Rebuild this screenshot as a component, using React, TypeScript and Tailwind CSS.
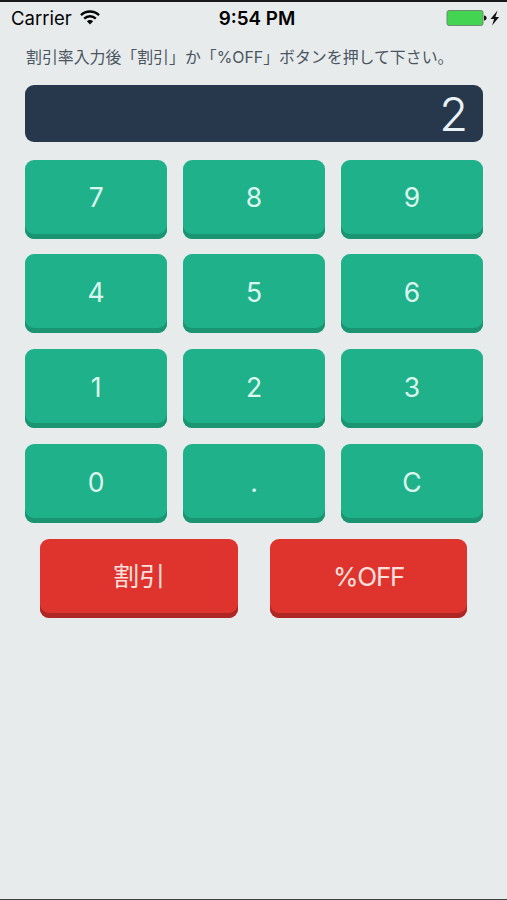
const keys = ["7", "8", "9", "4", "5", "6", "1", "2", "3", "0", ".", "C"];
const actions = ["割引", "%OFF"];

function StatusBar() {
  return (
    <div className="grid h-[34px] grid-cols-3 items-center border-t-2 border-[#18191b] pt-px pr-[7px] pl-[11px] text-black">
      <div className="flex items-center gap-[8px]">
        <span className="text-[18.5px] leading-none">Carrier</span>
        <svg className="-mt-[2px]" width="20" height="15" viewBox="0 0 20 15" fill="none">
          <path d="M1 5.2C6 .4 14 .4 19 5.2" stroke="currentColor" strokeWidth="2.5" />
          <path d="M4.2 8.6c3.3-3.1 8.3-3.1 11.6 0" stroke="currentColor" strokeWidth="2.4" />
          <path d="M6.9 11.3c1.8-1.6 4.4-1.6 6.2 0L10 14.5z" fill="currentColor" />
        </svg>
      </div>
      <p className="pt-px pr-[1px] pl-[4px] text-center text-[18.8px] leading-none font-semibold whitespace-nowrap">
        9:54 PM
      </p>
      <div className="flex items-center justify-end">
        <svg className="-mt-px" width="54" height="18" viewBox="0 0 54 18">
          <rect x="1" y="1.5" width="36" height="15" rx="2" fill="#43d551" stroke="#6f8a73" />
          <path d="M38 6.5c2 .3 2.6 1.3 2.6 2.5S40 11.2 38 11.5z" fill="#111" />
          <path d="M51.5 1.5l-7 8.6h3.6l-2 6.5 7-8.6h-3.7z" fill="#111" />
        </svg>
      </div>
    </div>
  );
}

export default function App() {
  return (
    <div className="flex h-[900px] w-[507px] flex-col border-b border-[#3c4142] bg-[#e7ebec] font-['Inter','Noto_Sans_CJK_JP',sans-serif]">
      <StatusBar />
      <p className="mt-[13px] ml-[26px] text-[15.9px] leading-[22px] whitespace-nowrap text-[#4b555f]">
        割引率入力後「割引」か「%OFF」ボタンを押して下さい。
      </p>
      <div className="mt-[16.3px] mr-[24px] ml-[25px] flex h-[57px] items-center justify-end rounded-[9px] bg-[#27384c] pr-[15px] text-[47px] leading-none font-light text-[#e9f3f7]">
        2
      </div>
      <div className="mt-[17.4px] mr-[24px] ml-[25px] grid grid-cols-3 gap-x-[15.6px] gap-y-[15.8px]">
        {keys.map((key) => (
          <button
            key={key}
            className="h-[79px] rounded-[9px] bg-[#1fb28a] pb-[3px] text-[26.5px] leading-none text-[#dcf5ee] shadow-[inset_0_-5px_0_#1b9471]"
          >
            {key}
          </button>
        ))}
      </div>
      <div className="mt-[15.8px] mr-[39.6px] ml-[40.4px] grid grid-cols-2 gap-x-[31.6px]">
        {actions.map((action) => (
          <button
            key={action}
            className="h-[79px] rounded-[9px] bg-[#df342e] pb-[3px] text-[26px] leading-none tracking-[-1.2px] text-[#fbe0de] shadow-[inset_0_-5px_0_#ae2724] first:tracking-normal"
          >
            {action}
          </button>
        ))}
      </div>
    </div>
  );
}
